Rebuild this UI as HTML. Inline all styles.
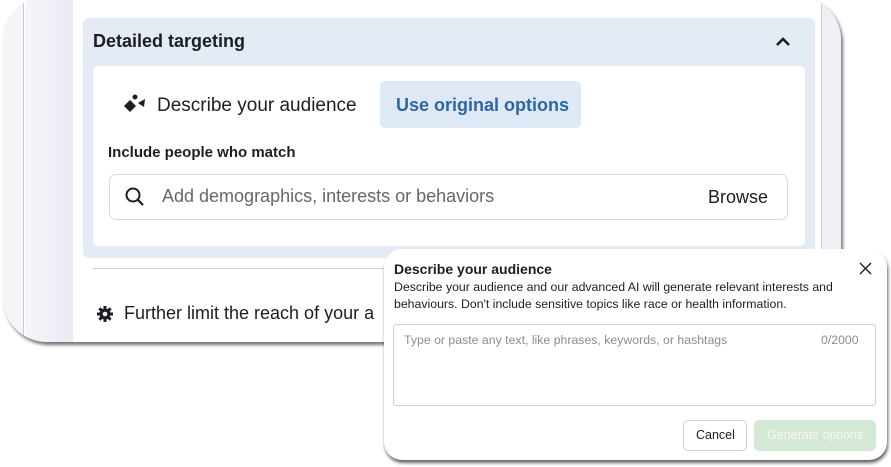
<!DOCTYPE html>
<html><head><style>
*{margin:0;padding:0;box-sizing:border-box}
body{width:891px;height:467px;background:#fff;position:relative;overflow:hidden;font-family:"Liberation Sans",Arial,sans-serif;color:#1c1e21}
.card{position:absolute;left:3px;top:-4px;width:838px;height:346px;border-radius:44px;background:#fff;overflow:hidden;box-shadow:2px 3px 3px rgba(0,0,0,.55)}
.strip1{position:absolute;left:0;top:0;width:21px;height:100%;background:#f5f5f8;border-right:1px solid #c9cad6}
.strip2{position:absolute;left:22px;top:0;width:48px;height:100%;background:linear-gradient(90deg,#f6f5f9,#ebeaf3)}
.strip3{position:absolute;right:0;top:0;width:20px;height:100%;background:#eef0f6;border-left:1px solid #cfd3de}
.panel{position:absolute;left:83px;top:18px;width:732px;height:240px;background:#e3ebf5;border-radius:6px}
.inner{position:absolute;left:93px;top:66px;width:712px;height:180px;background:#fff;border-radius:5px}
.abs{position:absolute;white-space:nowrap}
.pop{position:absolute;left:384px;top:249px;width:503px;height:211px;background:#fff;border-radius:18px;box-shadow:1px 3px 3px rgba(0,0,0,.6)}
</style></head><body>
<div class="card"><div class="strip1"></div><div class="strip2"></div><div class="strip3"></div></div>
<div class="panel"></div>
<div class="abs" style="left:93px;top:31px;font-size:18px;font-weight:bold">Detailed targeting</div>
<svg class="abs" style="left:775px;top:36px" width="16" height="12"><path d="M2 9 L8 3 L14 9" fill="none" stroke="#1c1e21" stroke-width="2.6"/></svg>
<div class="inner"></div>
<svg class="abs" style="left:123px;top:93px" width="24" height="22"><path d="M7 7 L13 13 L7 19 L1 13Z" fill="#1c1e21"/><circle cx="12" cy="4" r="2.5" fill="#1c1e21"/><path d="M15 10 L22 6 L21 14Z" fill="#1c1e21"/></svg>
<div class="abs" style="left:157px;top:95px;font-size:19px;color:#1c1e21">Describe your audience</div>
<div class="abs" style="left:380px;top:81px;width:201px;height:47px;background:#dfe9f5;border-radius:5px"></div>
<div class="abs" style="left:396px;top:95px;font-size:18px;font-weight:bold;color:#2d66a4">Use original options</div>
<div class="abs" style="left:108px;top:144px;font-size:15px;font-weight:bold">Include people who match</div>
<div class="abs" style="left:109px;top:174px;width:679px;height:46px;border:1px solid #d8dadf;border-radius:7px;background:#fff"></div>
<svg class="abs" style="left:124px;top:186px" width="22" height="22"><circle cx="9" cy="9" r="6.5" fill="none" stroke="#1c1e21" stroke-width="2"/><path d="M14 14 L19 19" stroke="#1c1e21" stroke-width="2.2"/></svg>
<div class="abs" style="left:162px;top:186px;font-size:18px;color:#65676b">Add demographics, interests or behaviors</div>
<div class="abs" style="left:708px;top:187px;font-size:18px;color:#1c1e21">Browse</div>
<div class="abs" style="left:93px;top:268px;width:750px;height:1px;background:#cfd1d6"></div>
<svg class="abs" style="left:96px;top:305px" width="18" height="18" viewBox="0 0 18 18"><g fill="#1c1e21"><circle cx="9" cy="9" r="5.5"/><rect x="7.5" y="1" width="3" height="16"/><rect x="1" y="7.5" width="16" height="3"/><rect x="7.5" y="1" width="3" height="16" transform="rotate(45 9 9)"/><rect x="7.5" y="1" width="3" height="16" transform="rotate(-45 9 9)"/></g><circle cx="9" cy="9" r="2.3" fill="#fff"/></svg>
<div class="abs" style="left:124px;top:303px;font-size:18px;color:#1c1e21">Further limit the reach of your a</div>
<div class="pop"></div>
<div class="abs" style="left:394px;top:261px;font-size:14px;font-weight:bold">Describe your audience</div>
<svg class="abs" style="left:859px;top:262px" width="13" height="13"><path d="M1 1 L12 12 M12 1 L1 12" stroke="#1c1e21" stroke-width="1.4"/></svg>
<div class="abs" style="left:394px;top:279px;font-size:12.3px;line-height:17px;color:#1c1e21">Describe your audience and our advanced AI will generate relevant interests and<br>behaviours. Don't include sensitive topics like race or health information.</div>
<div class="abs" style="left:393px;top:324px;width:483px;height:82px;border:1px solid #ccd0d5;border-radius:3px"></div>
<div class="abs" style="left:404px;top:333px;font-size:12.3px;color:#8a8d91">Type or paste any text, like phrases, keywords, or hashtags</div>
<div class="abs" style="left:821px;top:333px;font-size:12.3px;color:#8a8d91">0/2000</div>
<div class="abs" style="left:683px;top:420px;width:64px;height:31px;border:1px solid #ccd0d5;border-radius:5px"></div>
<div class="abs" style="left:696px;top:428px;font-size:12.5px">Cancel</div>
<div class="abs" style="left:754px;top:420px;width:122px;height:31px;background:#d4e8d6;border-radius:5px"></div>
<div class="abs" style="left:767px;top:428px;font-size:12.5px;color:#f4f9f4">Generate options</div>
</body></html>
